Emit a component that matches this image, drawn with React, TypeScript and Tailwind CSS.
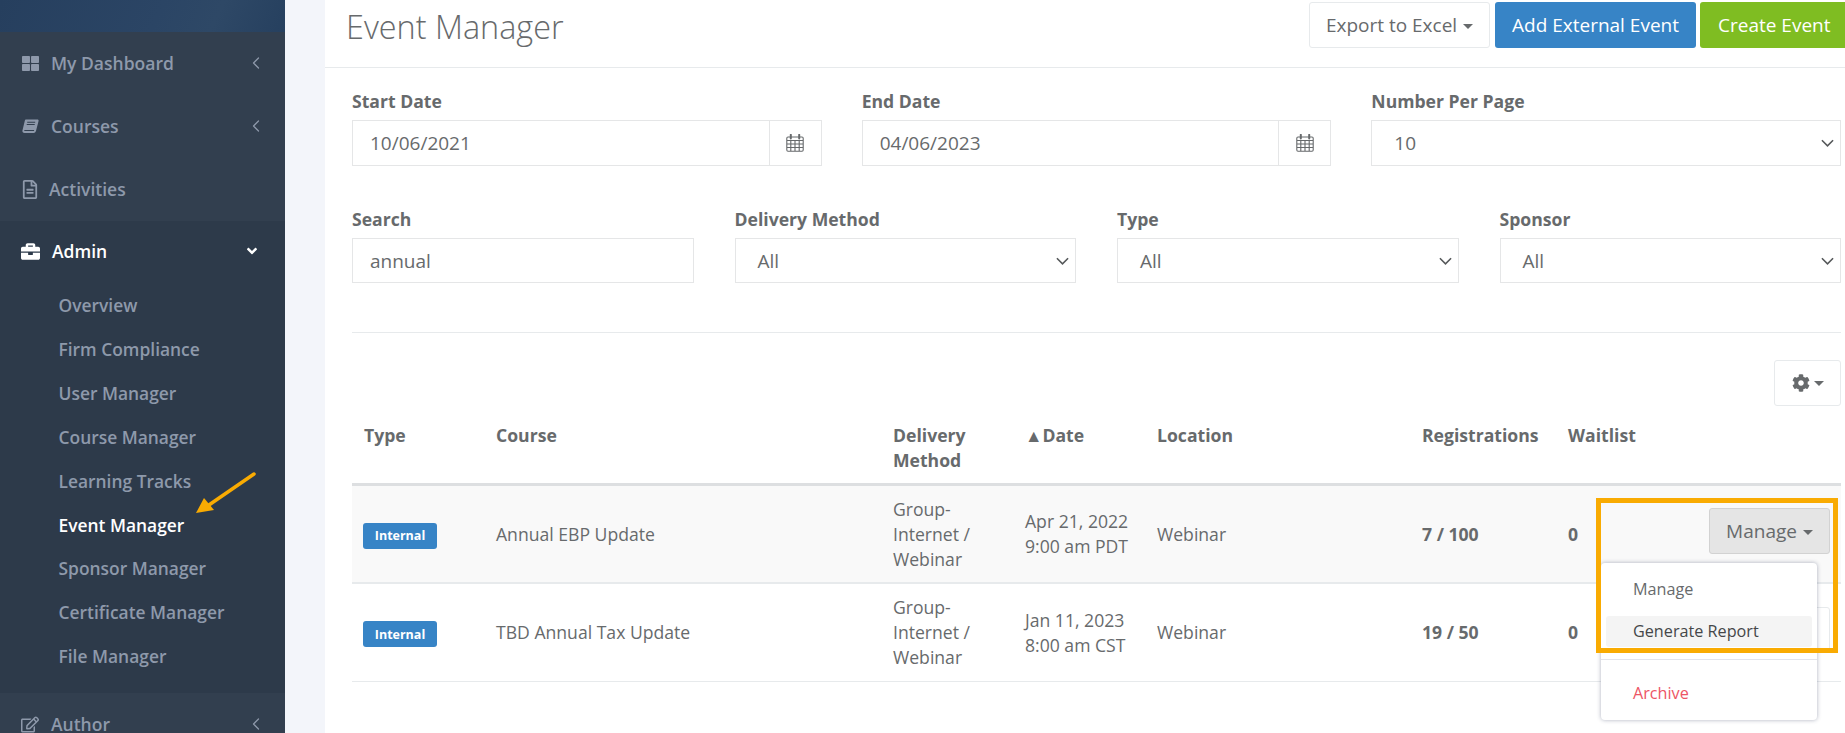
import { FaAngleDown, FaBriefcase, FaCog, FaRegEdit, FaRegFileAlt, FaThLarge } from "react-icons/fa";
import { ChevronLeft } from "lucide-react";
import type { ReactNode } from "react";

function BookIcon() {
    return (
        <svg viewBox="0 0 18 16" className="w-[17px] h-[15px]" fill="currentColor">
            <path d="M4 0.5h12.4c.9 0 1.4.7 1.2 1.5l-2.7 10.6c-.3 1.2-1.1 2.2-2.6 2.2H2.6C1 14.800.1 13.700.4 12.200L3 1.500C3.100.900 3.500.5 4 .5z" />
            <path d="M5.500 3.400h8.500M5 5.900h8.500M2.400 12.300h10.400" stroke="#323f4f" strokeWidth="1.100" fill="none" />
        </svg>
    );
}

function CalendarIcon() {
    return (
        <svg viewBox="0 0 18 18" className="w-[18px] h-[18px]" fill="none" stroke="#676a6c" strokeWidth="1.100">
            <rect x="0.800" y="3" width="16.400" height="14.200" rx="1.200" />
            <path d="M1 6.500h16M1 10h16M1 13.500h16M4.800 6.500v10.500M9 6.500v10.500M13.200 6.500v10.500" />
            <path d="M4.800 0.800v3.600M13.200 0.800v3.600" strokeWidth="2" strokeLinecap="round" />
        </svg>
    );
}

function Caret() {
    return <span className="inline-block ml-[6px] align-middle w-0 h-0 border-x-[5px] border-t-[5px] border-x-transparent border-t-current" />;
}

function NavItem({ icon, label, arrow = true, gap }: { icon: ReactNode; label: string; arrow?: boolean; gap: string }) {
    return (
        <div className="h-[63px] flex items-center pl-[21px] pr-[19px] pb-[1px] text-[#8e99ab] font-semibold text-[17.500px]">
            <span className="w-[18px] flex justify-center">{icon}</span>
            <span className={gap}>{label}</span>
            {arrow && <ChevronLeft size={20} strokeWidth={1.500} className="ml-auto" />}
        </div>
    );
}

const adminLinks = [
    "Overview",
    "Firm Compliance",
    "User Manager",
    "Course Manager",
    "Learning Tracks",
    "Event Manager",
    "Sponsor Manager",
    "Certificate Manager",
    "File Manager",
];

function Sidebar() {
    return (
        <aside className="w-[285px] shrink-0 h-full bg-[#323f4f] overflow-hidden">
            <div className="h-[32px] bg-[linear-gradient(115deg,#263f5e_0%,#2b4565_55%,#2e4866_75%,#26405f_100%)]" />
            <NavItem icon={<FaThLarge className="text-[17px]" />} label="My Dashboard" gap="ml-[12px]" />
            <NavItem icon={<BookIcon />} label="Courses" gap="ml-[12px]" />
            <NavItem icon={<FaRegFileAlt className="text-[19px]" />} label="Activities" arrow={false} gap="ml-[10px]" />
            <div className="bg-[#2d3a4a] h-[472px]">
                <div className="h-[63px] flex items-center pl-[21px] pr-[25px] pb-[3px] text-white font-semibold text-[17.500px]">
                    <FaBriefcase className="text-[19px]" />
                    <span className="ml-[12px]">Admin</span>
                    <FaAngleDown className="ml-auto text-[16px]" />
                </div>
                {adminLinks.map((link) => (
                    <div
                        key={link}
                        className={`h-[43.850px] flex items-center pl-[58.500px] pb-[1px] font-semibold text-[17.400px] ${link === "Event Manager" ? "text-white" : "text-[#8e99ab]"}`}
                    >
                        {link}
                    </div>
                ))}
            </div>
            <NavItem icon={<FaRegEdit className="text-[19px]" />} label="Author" gap="ml-[12px]" />
        </aside>
    );
}

function Field({ label, children }: { label: string; children: ReactNode }) {
    return (
        <div>
            <div className="text-[17.600px] leading-[22px] font-bold text-[#676a6c] mb-[8px]">{label}</div>
            {children}
        </div>
    );
}

function DateInput({ value }: { value: string }) {
    return (
        <div className="flex h-[46px] border border-[#e5e6e7] text-[19px] text-[#676a6c]">
            <div className="flex-1 flex items-center pl-[17px] pt-[1px]">{value}</div>
            <div className="w-[52px] border-l border-[#e5e6e7] flex items-center justify-center">
                <CalendarIcon />
            </div>
        </div>
    );
}

function SelectBox({ value, className = "h-[45px]" }: { value: string; className?: string }) {
    return (
        <div className={`flex items-center justify-between border border-[#e5e6e7] pl-[22px] pr-[6px] text-[19px] text-[#676a6c] ${className}`}>
            <span className="pt-[1px]">{value}</span>
            <svg viewBox="0 0 14 8" className="w-[13px] h-[8px]" fill="none" stroke="#55585a" strokeWidth="1.700">
                <path d="M1 1l6 6 6-6" />
            </svg>
        </div>
    );
}

const rows = [
    { course: "Annual EBP Update", date: "Apr 21, 2022", time: "9:00 am PDT", reg: "7 / 100", active: true },
    { course: "TBD Annual Tax Update", date: "Jan 11, 2023", time: "8:00 am CST", reg: "19 / 50", active: false },
];

function EventsTable() {
    const th = "align-top text-left font-bold pt-[12px] px-[12px] border-b-[3px] border-[#dddfe1]";
    return (
        <table className="mt-[5px] w-full table-fixed border-separate border-spacing-0 text-[17.600px] leading-[25px] text-[#676a6c]">
            <colgroup>
                <col className="w-[132px]" />
                <col className="w-[397px]" />
                <col className="w-[132px]" />
                <col className="w-[132px]" />
                <col className="w-[265px]" />
                <col className="w-[146px]" />
                <col className="w-[94px]" />
                <col />
            </colgroup>
            <thead>
                <tr className="h-[75px]">
                    <th className={th}>Type</th>
                    <th className={th}>Course</th>
                    <th className={th}>Delivery Method</th>
                    <th className={th}>▲Date</th>
                    <th className={th}>Location</th>
                    <th className={th}>Registrations</th>
                    <th className={th}>Waitlist</th>
                    <th className={th}></th>
                </tr>
            </thead>
            <tbody>
                {rows.map((row) => {
                    const td = `px-[12px] ${row.active ? "h-[98px] border-b-2 border-[#e7eaec] bg-[#f9f9f9]" : "h-[98px] border-b border-[#e7eaec]"}`;
                    return (
                        <tr key={row.course}>
                            <td className={`${td} !px-[11px]`}>
                                <span className="inline-flex items-center justify-center mt-[3px] w-[74px] h-[26px] rounded-[3px] bg-[#3784c6] text-white text-[12.500px] font-bold">
                                    Internal
                                </span>
                            </td>
                            <td className={td}>{row.course}</td>
                            <td className={td}>Group-Internet / Webinar</td>
                            <td className={td}>
                                {row.date}
                                <br />
                                {row.time}
                            </td>
                            <td className={td}>Webinar</td>
                            <td className={`${td} font-bold`}>{row.reg}</td>
                            <td className={`${td} font-bold`}>0</td>
                            <td className={`${td} !pr-[11px] text-right align-top ${row.active ? "pt-[22px]" : "pt-[23px]"}`}>
                                <button
                                    className={`h-[46px] w-[121px] rounded-[3px] border text-[19px] ${row.active ? "bg-[#e5e5e5] border-[#d2d2d2]" : "bg-white border-[#e7eaec]"}`}
                                >
                                    Manage
                                    <Caret />
                                </button>
                            </td>
                        </tr>
                    );
                })}
            </tbody>
        </table>
    );
}

export default function App() {
    return (
        <div className="relative flex h-screen overflow-hidden bg-[#f3f5fa] font-['Open_Sans',sans-serif]">
            <Sidebar />
            <div className="w-[40px] shrink-0" />
            <main className="flex-1 min-w-0 bg-white">
                <header className="h-[68px] border-b border-[#e7eaec] flex pl-[21px] pr-0 overflow-hidden">
                    <h1 className="text-[32.400px] font-light leading-[52px] text-[#676a6c]">Event Manager</h1>
                    <div className="ml-auto flex h-[46px] mt-[2px] text-[19px] whitespace-nowrap">
                        <button className="w-[181px] rounded-[3px] border border-[#e7eaec] bg-white text-[#676a6c]">
                            Export to Excel
                            <Caret />
                        </button>
                        <button className="w-[201px] ml-[5px] rounded-[3px] bg-[#3784c6] text-white">Add External Event</button>
                        <button className="w-[145px] ml-[4px] rounded-l-[3px] bg-[#7fbd22] text-white text-left pl-[18px]">Create Event</button>
                    </div>
                </header>

                <div className="pl-[27px] pr-[4px] pt-[22px]">
                    <div className="grid grid-cols-3 gap-x-[40px]">
                        <Field label="Start Date">
                            <DateInput value="10/06/2021" />
                        </Field>
                        <Field label="End Date">
                            <DateInput value="04/06/2023" />
                        </Field>
                        <Field label="Number Per Page">
                            <SelectBox value="10" className="h-[46px]" />
                        </Field>
                    </div>
                    <div className="grid grid-cols-4 gap-x-[41px] mt-[42px]">
                        <Field label="Search">
                            <div className="flex items-center h-[45px] border border-[#e5e6e7] pl-[17px] pt-[1px] text-[19px] text-[#676a6c]">annual</div>
                        </Field>
                        <Field label="Delivery Method">
                            <SelectBox value="All" />
                        </Field>
                        <Field label="Type">
                            <SelectBox value="All" />
                        </Field>
                        <Field label="Sponsor">
                            <SelectBox value="All" />
                        </Field>
                    </div>

                    <div className="mt-[49px] border-t border-[#e7eaec]" />

                    <div className="flex justify-end mt-[27px]">
                        <button className="w-[67px] h-[46px] rounded-[3px] border border-[#e7eaec] text-[#676a6c] flex items-center justify-center">
                            <FaCog className="text-[18px]" />
                            <span className="ml-[4px] w-0 h-0 border-x-[5px] border-t-[5px] border-x-transparent border-t-current" />
                        </button>
                    </div>

                    <EventsTable />
                </div>
            </main>

            {/* dropdown opened from the first row */}
            <div className="absolute left-[1601px] top-[563px] w-[216px] h-[157px] z-10 bg-white rounded-[4px] shadow-[0_0_4px_rgba(70,80,110,0.45)] text-[16.200px] text-[#676a6c]">
                <div className="h-[53px] pl-[32px] flex items-center">Manage</div>
                <div className="mx-[5px] h-[31px] pl-[27px] flex items-center rounded-[3px] bg-[#f4f4f4] text-[#454749]">Generate Report</div>
                <div className="mt-[12px] border-t border-[#e3e4ea]" />
                <div className="h-[66px] pl-[32px] flex items-center text-[#ed5565]">Archive</div>
            </div>

            {/* annotation marks */}
            <div className="absolute left-[1596px] top-[498px] w-[242px] h-[155px] z-20 border-[5px] border-[#f9ab02]" />
            <svg className="absolute left-[190px] top-[468px] z-20" width="70" height="52" viewBox="0 0 70 52">
                <path d="M64 6L16 39" stroke="#f9ab02" strokeWidth="3.500" strokeLinecap="round" />
                <path d="M6 45L14 30L24 42Z" fill="#f9ab02" />
            </svg>
        </div>
    );
}
